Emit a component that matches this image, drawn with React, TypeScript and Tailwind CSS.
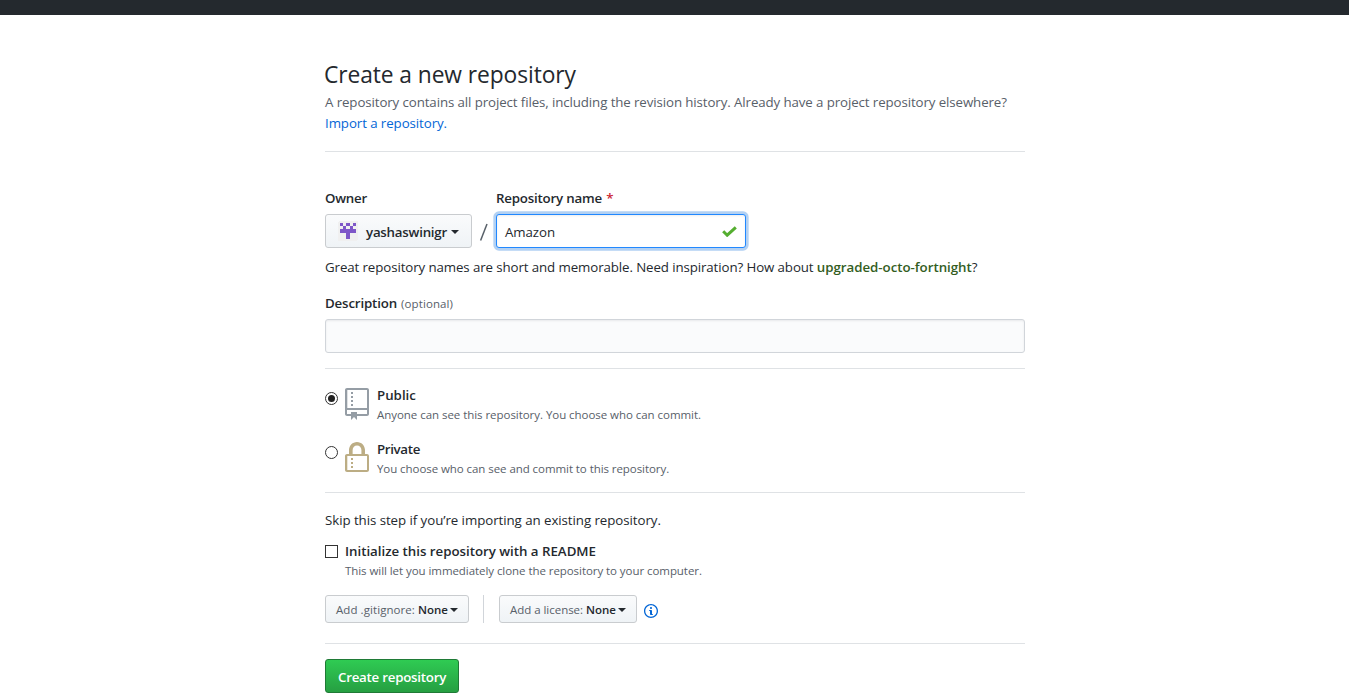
import React from "react";

const Caret = () => (
  <svg className="mt-0.5 shrink-0" width="8" height="4" viewBox="0 0 8 4" fill="#24292e">
    <path d="M0 0h8L4 4z" />
  </svg>
);

const Avatar = () => (
  <svg className="shrink-0" width="20" height="20" viewBox="0 0 20 20" shapeRendering="crispEdges">
    <rect width="20" height="20" rx="2" fill="#f0f0f0" />
    <path
      fill="#7e57c8"
      d="M2 2h3v3H2zM8 2h4v3H8zM15 2h3v3h-3zM5 5h3v3H5zM12 5h3v3h-3zM2 8h16v4H2zM8 12h4v6H8z"
    />
  </svg>
);

const RepoIcon = () => (
  <svg className="shrink-0" width="24" height="32" viewBox="0 0 12 16" fill="#959da5">
    <path
      fillRule="evenodd"
      d="M4 9H3V8h1v1zm0-3H3v1h1V6zm0-2H3v1h1V4zm0-2H3v1h1V2zm8-1v12c0 .55-.45 1-1 1H6v2l-1.5-1.5L3 16v-2H1c-.55 0-1-.45-1-1V1c0-.55.45-1 1-1h10c.55 0 1 .45 1 1zm-1 10H1v2h2v-1h3v1h5v-2zm0-10H1.15v9H11V1z"
    />
  </svg>
);

const LockIcon = () => (
  <svg className="shrink-0" width="24" height="32" viewBox="0 0 12 16" fill="#bcad84">
    <path
      fillRule="evenodd"
      d="M4 13H3v-1h1v1zm8-6v7c0 .55-.45 1-1 1H1c-.55 0-1-.45-1-1V7c0-.55.45-1 1-1h1V4c0-2.2 1.8-4 4-4s4 1.8 4 4v2h1c.55 0 1 .45 1 1zM3.8 6h4.41V4c0-1.22-.98-2.2-2.2-2.2-1.22 0-2.2.98-2.2 2.2v2H3.8zM11 7H1.15v7H11V7zM4 8H3v1h1V8zm0 2H3v1h1v-1z"
    />
  </svg>
);

const InfoIcon = () => (
  <svg className="shrink-0" width="14" height="16" viewBox="0 0 14 16" fill="#0366d6">
    <path
      fillRule="evenodd"
      d="M6.3 5.69a.942.942 0 0 1-.28-.7c0-.28.09-.52.28-.7.19-.18.42-.28.7-.28.28 0 .52.09.7.28.18.19.28.42.28.7 0 .28-.09.52-.28.7a1 1 0 0 1-.7.3c-.28 0-.52-.11-.7-.3zM8 7.99c-.02-.25-.11-.48-.31-.69-.2-.19-.42-.3-.69-.31H6c-.27.02-.48.13-.69.31-.2.2-.3.44-.31.69h1v3c.02.27.11.5.31.69.2.2.42.31.69.31h1c.27 0 .48-.11.69-.31.2-.19.3-.42.31-.69H8V7.98v.01zM7 2.3c-3.14 0-5.7 2.54-5.7 5.68 0 3.14 2.56 5.7 5.7 5.7s5.7-2.55 5.7-5.7c0-3.15-2.56-5.69-5.7-5.69v.01zM7 .98c3.86 0 7 3.14 7 7s-3.14 7-7 7-7-3.12-7-7 3.14-7 7-7z"
    />
  </svg>
);

const CheckIcon = () => (
  <svg className="shrink-0" width="15" height="11" viewBox="0 0 15 11" fill="none">
    <path d="M1.2 5.2 5.2 9.2 13.8 1.3" stroke="#55ae30" strokeWidth="3" />
  </svg>
);

const Radio = ({ checked = false }: { checked?: boolean }) => (
  <span className="flex size-[13px] shrink-0 items-center justify-center rounded-full border border-[#333] bg-white">
    {checked && <span className="size-[7px] rounded-full bg-[#222]" />}
  </span>
);

const Rule = ({ className }: { className: string }) => <div className={`h-px bg-[#dfe2e5] ${className}`} />;

const button = "flex items-center rounded-[3px] border border-[#c9cccf] bg-linear-to-b from-[#fafbfc] to-[#eff3f6]";

export default function App() {
  return (
    <div className="h-[693px] w-[1366px] overflow-hidden whitespace-nowrap bg-white font-['Open_Sans','Noto_Sans',sans-serif] text-[13.3px] leading-[21px] text-[#24292e]">
      <header className="h-[15px] w-[1349px] bg-[#24292e]" />
      <main className="ml-[325px] w-[700px] pt-[42px]">
        <h1 className="-ml-px h-[35px] text-[22.8px] leading-9 tracking-[-0.09px]">Create a new repository</h1>
        <p className="tracking-[-0.104px] text-[#586069]">
          A repository contains all project files, including the revision history. Already have a project repository elsewhere?
        </p>
        <a className="block tracking-[-0.085px] text-[#0366d6]">Import a repository.</a>
        <Rule className="mt-[17px]" />

        <div className="mt-9 flex">
          <div className="w-[147px]">
            <div className="font-semibold tracking-[-0.22px]">Owner</div>
            <div className={`${button} mt-[5px] h-[34px] pl-3`}>
              <Avatar />
              <span className="ml-2 w-[85px] pt-0.5 font-semibold tracking-[-0.23px]">yashaswinigr</span>
              <Caret />
            </div>
          </div>
          <div className="flex w-6 items-end justify-center">
            <svg width="10" height="34" viewBox="0 0 10 34" fill="none">
              <path d="M8 10 1.6 26.6" stroke="#586069" strokeWidth="1.5" />
            </svg>
          </div>
          <div className="w-[250px]">
            <div className="font-semibold tracking-[-0.2px]">
              Repository name <span className="ml-px text-[#cb2431]">*</span>
            </div>
            <div className="mt-[5px] flex h-[34px] items-center justify-between rounded-[3px] border border-[#2188ff] bg-white pr-2 pl-2 shadow-[inset_0_1px_2px_rgba(27,31,35,0.075),0_0_0_0.2em_rgba(3,102,214,0.3)]">
              <span className="pt-0.5 tracking-[-0.09px]">Amazon</span>
              <CheckIcon />
            </div>
          </div>
        </div>

        <p className="mt-[9px] tracking-[-0.103px]">
          Great repository names are short and memorable. Need inspiration? How about{" "}
          <strong className="font-semibold tracking-[-0.03px] text-[#335d1e]">upgraded-octo-fortnight</strong>?
        </p>

        <div className="mt-[15px]">
          <span className="font-semibold tracking-[-0.155px]">Description</span>
          <span className="ml-1 text-[11.5px] tracking-[0.1px] text-[#586069]">(optional)</span>
        </div>
        <div className="mt-[5px] h-[34px] rounded-[3px] border border-[#d1d5da] bg-[#fafbfc] shadow-[inset_0_1px_2px_rgba(27,31,35,0.075)]" />
        <Rule className="mt-[15px]" />

        <div className="mt-4 flex h-[54px]">
          <div className="pt-[7px]"><Radio checked /></div>
          <div className="ml-[7px] pt-[3px]"><RepoIcon /></div>
          <div className="ml-2">
            <div className="font-semibold">Public</div>
            <div className="text-[11.5px] leading-[18px] tracking-[-0.045px] text-[#586069]">
              Anyone can see this repository. You choose who can commit.
            </div>
          </div>
        </div>
        <div className="flex h-[53px]">
          <div className="pt-[7px]"><Radio /></div>
          <div className="ml-[7px] pt-[3px]"><LockIcon /></div>
          <div className="ml-2">
            <div className="font-semibold tracking-[-0.34px]">Private</div>
            <div className="text-[11.5px] leading-[18px] tracking-[-0.066px] text-[#586069]">
              You choose who can see and commit to this repository.
            </div>
          </div>
        </div>
        <Rule className="" />

        <p className="mt-[17px] tracking-[-0.06px]">Skip this step if you’re importing an existing repository.</p>
        <div className="mt-2.5 flex h-[39px]">
          <span className="mt-1 size-[13px] border border-[#333] bg-white" />
          <div className="ml-[7px]">
            <div className="font-semibold tracking-[-0.02px]">Initialize this repository with a README</div>
            <div className="text-[11.5px] leading-[18px] tracking-[-0.06px] text-[#586069]">
              This will let you immediately clone the repository to your computer.
            </div>
          </div>
        </div>

        <div className="mt-[15px] flex h-7 text-[11.5px]">
          <div className={`${button} w-36 pl-2.5`}>
            <span className="w-[82px] tracking-[0.07px] text-[#586069]">Add .gitignore:</span>
            <span className="w-[32px] font-semibold">None</span>
            <Caret />
          </div>
          <div className="ml-3.5 w-px bg-[#d1d5da]" />
          <div className={`${button} ml-[15px] w-[138px] pl-2.5`}>
            <span className="w-[76px] tracking-[-0.035px] text-[#586069]">Add a license:</span>
            <span className="w-[32px] font-semibold">None</span>
            <Caret />
          </div>
          <div className="ml-[7.4px] pt-2"><InfoIcon /></div>
        </div>
        <Rule className="mt-5" />
        <button className="mt-[15px] flex h-[34px] w-[134px] items-center justify-center rounded-[3px] border border-[#1f7a36] bg-linear-to-b from-[#2fcb53] to-[#269f42] pt-0.5 font-semibold tracking-[-0.24px] text-white">
          Create repository
        </button>
      </main>
    </div>
  );
}
